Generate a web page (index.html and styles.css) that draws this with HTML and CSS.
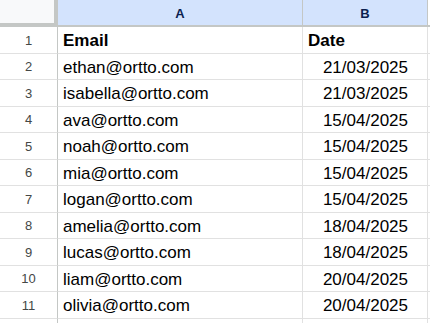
FILE: index.html
```html
<!DOCTYPE html>
<html>
<head>
<meta charset="utf-8">
<link rel="stylesheet" href="styles.css">
</head>
<body>
<div class="sheet">
  <div class="corner"></div>
  <div class="colhead">A</div>
  <div class="colhead">B</div>
  <div class="extra head"></div>

  <div class="rowhead">1</div><div class="cell bold">Email</div><div class="cell bold">Date</div><div class="extra"></div>
  <div class="rowhead">2</div><div class="cell">ethan@ortto.com</div><div class="cell num">21/03/2025</div><div class="extra"></div>
  <div class="rowhead">3</div><div class="cell">isabella@ortto.com</div><div class="cell num">21/03/2025</div><div class="extra"></div>
  <div class="rowhead">4</div><div class="cell">ava@ortto.com</div><div class="cell num">15/04/2025</div><div class="extra"></div>
  <div class="rowhead">5</div><div class="cell">noah@ortto.com</div><div class="cell num">15/04/2025</div><div class="extra"></div>
  <div class="rowhead">6</div><div class="cell">mia@ortto.com</div><div class="cell num">15/04/2025</div><div class="extra"></div>
  <div class="rowhead">7</div><div class="cell">logan@ortto.com</div><div class="cell num">15/04/2025</div><div class="extra"></div>
  <div class="rowhead">8</div><div class="cell">amelia@ortto.com</div><div class="cell num">18/04/2025</div><div class="extra"></div>
  <div class="rowhead">9</div><div class="cell">lucas@ortto.com</div><div class="cell num">18/04/2025</div><div class="extra"></div>
  <div class="rowhead">10</div><div class="cell">liam@ortto.com</div><div class="cell num">20/04/2025</div><div class="extra"></div>
  <div class="rowhead">11</div><div class="cell">olivia@ortto.com</div><div class="cell num">20/04/2025</div><div class="extra"></div>
  <div class="rowhead"></div><div class="cell"></div><div class="cell"></div><div class="extra"></div>
</div>
</body>
</html>
```
FILE: styles.css
```css
html, body {
  margin: 0;
  padding: 0;
  background: #ffffff;
  overflow: hidden;
}
.sheet {
  display: grid;
  grid-template-columns: 58px 245px 125px 10px;
  grid-template-rows: 27px repeat(12, 26.5px);
  font-family: "Liberation Sans", Arial, sans-serif;
  width: 430px;
  height: 323px;
  overflow: hidden;
}
.corner {
  background: #f8f9fa;
  border-right: 4px solid #c4c7c5;
  border-bottom: 4px solid #c4c7c5;
  box-sizing: border-box;
}
.colhead {
  background: #d3e3fd;
  color: #0b1f4f;
  font-weight: bold;
  font-size: 13px;
  display: flex;
  align-items: center;
  justify-content: center;
  border-right: 1px solid #c4c7c5;
  border-bottom: 2px solid #c4c7c5;
  box-sizing: border-box;
  padding-top: 1px;
}
.extra {
  border-bottom: 1px solid #e1e1e1;
  box-sizing: border-box;
}
.extra.head {
  border-bottom: 2px solid #c4c7c5;
}
.rowhead {
  background: #ffffff;
  color: #444746;
  font-size: 13px;
  display: flex;
  align-items: center;
  justify-content: center;
  border-right: 1px solid #c4c7c5;
  border-bottom: 1px solid #e1e1e1;
  box-sizing: border-box;
  padding-top: 1px;
}
.cell {
  font-size: 17px;
  color: #000000;
  display: flex;
  align-items: center;
  padding: 3px 5px 0 5px;
  border-right: 1px solid #e1e1e1;
  border-bottom: 1px solid #e1e1e1;
  box-sizing: border-box;
  white-space: nowrap;
  overflow: hidden;
}
.cell.bold {
  font-weight: bold;
}
.cell.num {
  justify-content: flex-end;
  padding-right: 19px;
}
```
